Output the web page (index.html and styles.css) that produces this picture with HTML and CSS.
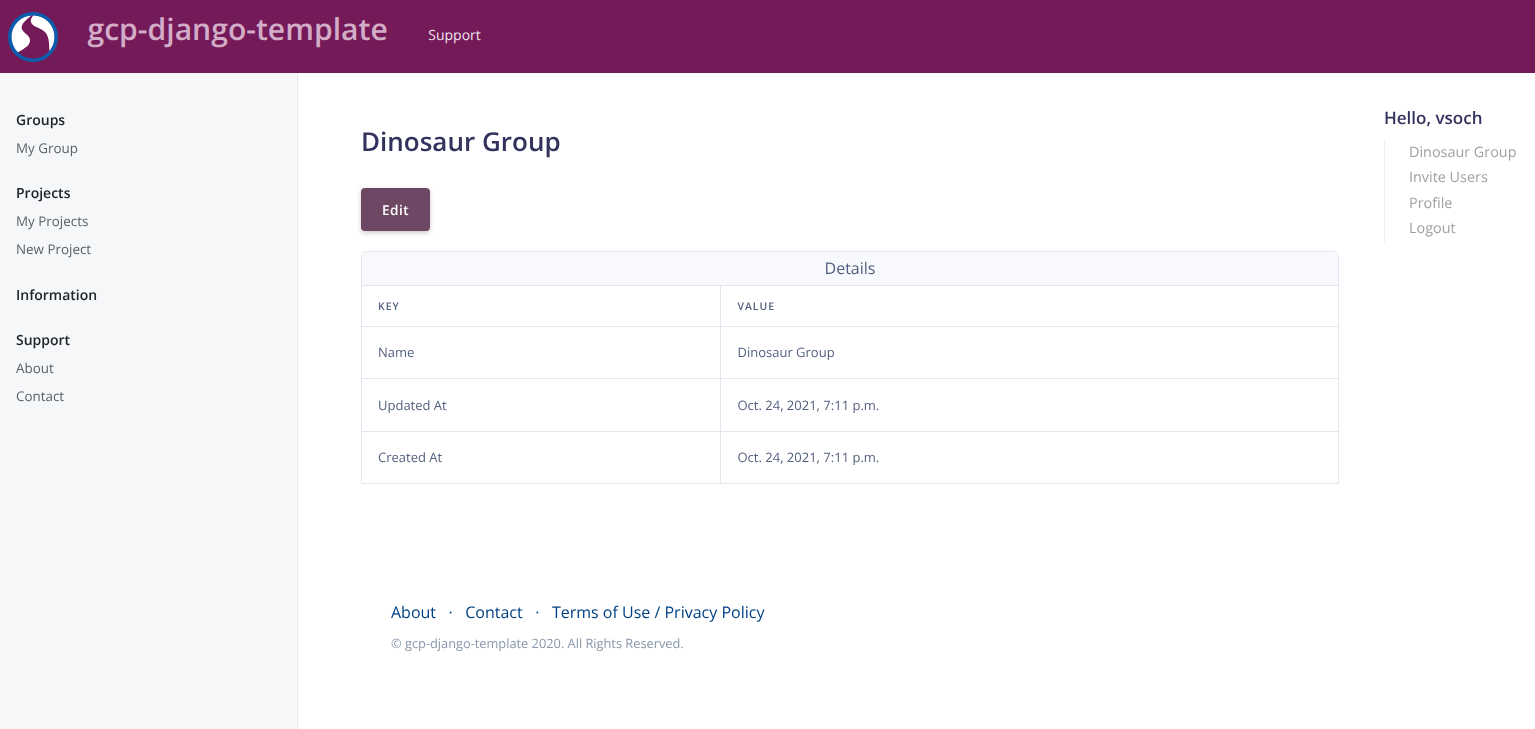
FILE: index.html
```html
<!DOCTYPE html>
<html lang="en">
<head>
<meta charset="utf-8">
<title>gcp-django-template</title>
<link rel="stylesheet" href="styles.css">
</head>
<body>
<header class="topbar">
  <svg class="logo" viewBox="0 0 50 50" width="50" height="50">
    <circle cx="25" cy="25" r="24" fill="#741a58"/>
    <path d="M24 3 C18 8 13 12 13.7 16.3 C14.5 21 22 23 22 28 C22 33 19 35 8.7 41 A 22.5 22.5 0 0 1 24 3 Z" fill="#fff"/>
    <path d="M25.5 3 C22.5 7 22 10 24 12 C27 15.5 33 16 37 20 C41 24 41.5 32 41.3 40.5 A 22.5 22.5 0 0 0 25.5 3 Z" fill="#fff"/>
    <circle cx="25" cy="25" r="23.2" fill="none" stroke="#0b5cab" stroke-width="3.6"/>
  </svg>
  <a class="brand">gcp-django-template</a>
  <a class="toplink">Support</a>
</header>
<div class="layout">
  <aside class="sidebar">
    <section class="navgroup">
      <h4>Groups</h4>
      <a>My Group</a>
    </section>
    <section class="navgroup">
      <h4>Projects</h4>
      <a>My Projects</a>
      <a>New Project</a>
    </section>
    <section class="navgroup">
      <h4>Information</h4>
    </section>
    <section class="navgroup">
      <h4>Support</h4>
      <a>About</a>
      <a>Contact</a>
    </section>
  </aside>
  <main class="content">
    <h1>Dinosaur Group</h1>
    <a class="btn">Edit</a>
    <div class="card">
      <div class="card-head">Details</div>
      <table class="details">
        <thead>
          <tr><th class="c1">Key</th><th>Value</th></tr>
        </thead>
        <tbody>
          <tr><td class="c1">Name</td><td>Dinosaur Group</td></tr>
          <tr><td class="c1">Updated At</td><td>Oct. 24, 2021, 7:11 p.m.</td></tr>
          <tr><td class="c1">Created At</td><td>Oct. 24, 2021, 7:11 p.m.</td></tr>
        </tbody>
      </table>
    </div>
    <footer class="foot">
      <nav class="foot-links">
        <a>About</a><span class="dot">·</span><a>Contact</a><span class="dot">·</span><a>Terms of Use / Privacy Policy</a>
      </nav>
      <p class="copy">© gcp-django-template 2020. All Rights Reserved.</p>
    </footer>
  </main>
  <aside class="right">
    <h5>Hello, vsoch</h5>
    <ul>
      <li>Dinosaur Group</li>
      <li>Invite Users</li>
      <li>Profile</li>
      <li>Logout</li>
    </ul>
  </aside>
</div>
</body>
</html>
```
FILE: styles.css
```css
* { box-sizing: border-box; }
html, body { height: 100%; }
body {
  margin: 0;
  font-family: "Open Sans", sans-serif;
  color: #32325d;
  background: #fff;
  overflow: hidden;
  text-rendering: geometricPrecision;
}
.topbar {
  height: 73px;
  background: #741a58;
  display: flex;
  align-items: center;
  will-change: opacity;
}
.logo { margin: 0 0 0 8px; flex: none; position: relative; top: 0.5px; }
.brand {
  margin-left: 29.5px;
  font-size: 30.1px;
  line-height: 40px;
  font-weight: 600;
  color: #d3adc8;
  position: relative;
  top: -8px;
}
.toplink {
  margin-left: 40.5px;
  font-size: 14px;
  color: #f0e1ec;
  position: relative;
  top: -1px;
}
.layout { display: flex; height: 656px; will-change: opacity; }
.sidebar {
  width: 298px;
  flex: none;
  background: #f6f7f9;
  border-right: 1px solid #e7e9ee;
  padding: 38px 16px 0;
}
.navgroup { padding-bottom: 22.4px; }
.navgroup h4 {
  margin: 0 0 3px;
  font-size: 14px;
  line-height: 20px;
  font-weight: 600;
  color: #212529;
}
.navgroup a {
  display: block;
  font-size: 13.4px;
  line-height: 28px;
  color: #5a5f66;
}
.content { flex: none; width: 1041px; padding: 49px 0 0 63px; }
h1 {
  margin: 0 0 28px;
  font-size: 26px;
  line-height: 38px;
  font-weight: 600;
  color: #32325d;
}
.btn {
  display: block;
  width: 69px;
  height: 43px;
  background: #6d4763;
  border-radius: 4px;
  color: #fff;
  font-size: 13.6px;
  font-weight: 600;
  letter-spacing: 0.5px;
  line-height: 44px;
  text-align: center;
  box-shadow: 0 2px 5px rgba(0,0,0,.2);
}
.card {
  width: 978px;
  margin-top: 20px;
  border: 1px solid #e3e6ee;
  border-radius: 6px 6px 0 0;
}
.card-head {
  height: 34px;
  background: #f8f9fd;
  border-bottom: 1px solid #e3e6ee;
  border-radius: 6px 6px 0 0;
  text-align: center;
  font-size: 16px;
  line-height: 33px;
  color: #525f7f;
}
.details { width: 100%; border-collapse: collapse; table-layout: fixed; }
.details th, .details td { text-align: left; padding: 0 16px; color: #525f7f; }
.details th + th, .details td + td { padding-left: 17px; }
.details .c1 { width: 358px; border-right: 1px solid #e3e6ee; }
.details th {
  height: 40px;
  padding-top: 2px;
  font-size: 10.4px;
  font-weight: 600;
  letter-spacing: 1px;
  text-transform: uppercase;
}
.details td {
  height: 52px;
  font-size: 13px;
  border-top: 1px solid #e3e6ee;
}
.details tr:nth-child(2) td { height: 53px; }
.foot { padding: 116px 0 0 30px; }
.foot-links { font-size: 16px; line-height: 24px; color: #004085; }
.dot { margin: 0 12.5px; }
.copy { margin: 10px 0 0; font-size: 12.8px; line-height: 19px; color: #8898aa; }
.right { flex: 1; padding: 33px 0 0 45px; }
.right h5 {
  margin: 0 0 9px;
  font-size: 17px;
  line-height: 24px;
  font-weight: 600;
  color: #32325d;
}
.right ul {
  margin: 0;
  padding: 0.5px 0 0 24px;
  list-style: none;
  border-left: 1px solid #eceef2;
}
.right li {
  font-size: 14.4px;
  line-height: 25.5px;
  color: #a0a0a6;
  white-space: nowrap;
}
```
